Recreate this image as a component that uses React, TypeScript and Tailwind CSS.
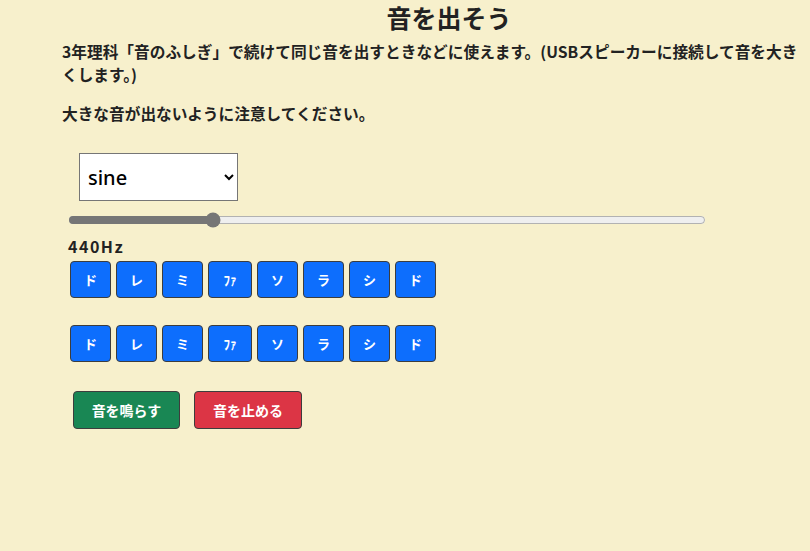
import { useState } from "react";

const notes = ["ド", "レ", "ミ", "ﾌｧ", "ソ", "ラ", "シ", "ド"];

function NoteRow() {
    return (
        <div className="flex gap-[5px]">
            {notes.map((n, i) => (
                <button
                    key={i}
                    className={"h-[37px] rounded-[4px] border border-[#3d3d3d] bg-[#0d6efd] text-[13px] font-bold text-white " + (n === "ﾌｧ" ? "w-[44px]" : "w-[41px]")}
                >
                    {n}
                </button>
            ))}
        </div>
    );
}

export default function App() {
    const [freq, setFreq] = useState(440);
    const [wave, setWave] = useState("sine");

    return (
        <div className="min-h-[551px] w-full bg-[#f7f0cc] text-[#222] font-['Noto_Sans_CJK_JP',sans-serif] font-bold">
            <div className="pl-[62px] pr-[4px]">
                <h1 className="pt-[1px] pl-[30px] text-center text-[25px] leading-[32px]">音を出そう</h1>
                <p className="mt-[7px] text-[15.7px] leading-[23px]">
                    3年理科「音のふしぎ」で続けて同じ音を出すときなどに使えます。(USBスピーカーに接続して音を大きくします。)
                </p>
                <p className="mt-[16px] text-[15.7px] leading-[23px]">大きな音が出ないように注意してください。</p>
            </div>
            <div className="pl-[68px] mt-[28px]">
                <div className="pl-[11px]">
                    <select
                        value={wave}
                        onChange={(e) => setWave(e.target.value)}
                        className="h-[48px] w-[159px] border border-[#767676] bg-white pl-[4px] text-[20px] font-medium text-black font-['Noto_Sans',sans-serif]"
                    >
                        <option value="sine">sine</option>
                        <option value="square">square</option>
                        <option value="sawtooth">sawtooth</option>
                        <option value="triangle">triangle</option>
                    </select>
                </div>
                <input
                    type="range"
                    min={0}
                    max={2000}
                    value={freq}
                    onChange={(e) => setFreq(Number(e.target.value))}
                    className="mt-[11px] block w-[638px] accent-[#767676]"
                />
                <div className="mt-[9px] text-[16px] leading-[18px] tracking-[1.5px]">{freq}Hz</div>
                <div className="mt-[6px] pl-[2px]">
                    <NoteRow />
                    <div className="mt-[27px]">
                        <NoteRow />
                    </div>
                </div>
                <div className="mt-[29px] flex gap-[14px] pl-[5px]">
                    <button className="h-[38px] w-[107px] rounded-[4px] border border-[#3d3d3d] bg-[#198754] text-[14px] font-bold text-white">音を鳴らす</button>
                    <button className="h-[38px] w-[108px] rounded-[4px] border border-[#3d3d3d] bg-[#dc3545] text-[14px] font-bold text-white">音を止める</button>
                </div>
            </div>
        </div>
    );
}
